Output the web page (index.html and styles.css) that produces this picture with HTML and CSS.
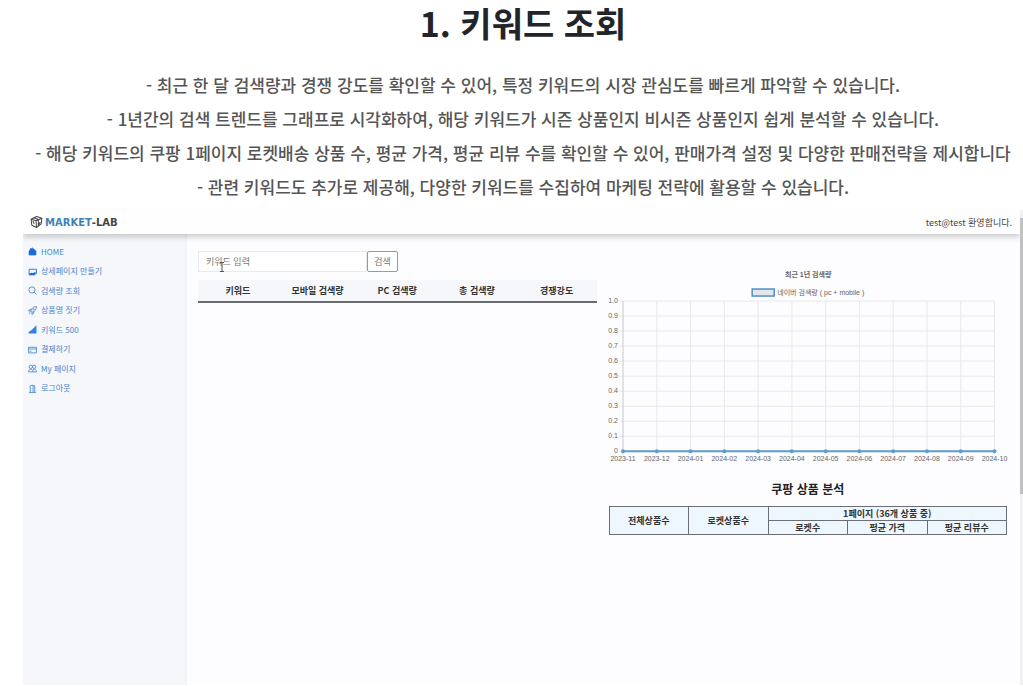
FILE: index.html
```
<!DOCTYPE html>
<html lang="ko">
<head>
    <meta charset="UTF-8">
    <title>키워드 조회</title>
    <link rel="stylesheet" href="styles.css">
</head>
<body>
    <section class="guide">
        <h1>1. 키워드 조회</h1>
        <p>- 최근 한 달 검색량과 경쟁 강도를 확인할 수 있어, 특정 키워드의 시장 관심도를 빠르게 파악할 수 있습니다.</p>
        <p>- 1년간의 검색 트렌드를 그래프로 시각화하여, 해당 키워드가 시즌 상품인지 비시즌 상품인지 쉽게 분석할 수 있습니다.</p>
        <p>- 해당 키워드의 쿠팡 1페이지 로켓배송 상품 수, 평균 가격, 평균 리뷰 수를 확인할 수 있어, 판매가격 설정 및 다양한 판매전략을 제시합니다</p>
        <p>- 관련 키워드도 추가로 제공해, 다양한 키워드를 수집하여 마케팅 전략에 활용할 수 있습니다.</p>
    </section>

    <div class="screen">
        <div class="app">
            <header class="topbar">
                <a class="logo" href="#">
                    <svg viewBox="0 0 14 14" fill="none" stroke="#444" stroke-width="1.1" stroke-linejoin="round">
                        <path d="M7 1 L12.8 3 L12 9 L7 13 L2 10.5 L1.2 4 Z"/>
                        <path d="M1.2 4 L6.5 5.6 L12.8 3 M6.5 5.6 L7 13 M4 2.5 L9 4.4 M9 5 V11 L11 7 M3 6 L4.6 9"/>
                    </svg>
                    <span>MARKET<b>-LAB</b></span>
                </a>
                <span class="welcome">test@test 환영합니다.</span>
            </header>
            <div class="content">
                <nav class="sidebar">
                    <div class="menu">
                        <a href="#"><svg viewBox="0 0 16 16"><path fill="#1769e0" stroke="#1769e0" d="M8 2 L14 7 V14 H2 V7 L4 5 V3 H6 Z"/></svg>HOME</a>
                        <a href="#"><svg viewBox="0 0 16 16"><path stroke="#1769e0" d="M2 4 H15 V12 H12 V14 H2 Z"/><path fill="#1769e0" stroke="none" d="M2 14 V12 L6 10 L9 11 L13 8 V12 L11 14 Z"/></svg>상세페이지 만들기</a>
                        <a href="#"><svg viewBox="0 0 16 16"><circle cx="7" cy="7" r="5.5"/><path d="M11 11 L15 15"/></svg>검색량 조회</a>
                        <a href="#"><svg viewBox="0 0 16 16"><path d="M5 9 C6 4 10 1 15 1 C15 6 12 10 7 11 Z M6 6 H3 L1 9 H5 M10 10 V13 L7 15 V11 M4 11 L2 14"/><circle cx="10" cy="6" r="1"/></svg>상품명 짓기</a>
                        <a href="#"><svg viewBox="0 0 16 16"><path fill="#2f80ed" stroke="none" d="M1 15 V12 L4 11 V10 L8 8 V7 L11 5 V4 L15 1 V15 Z"/></svg>키워드 500</a>
                        <a href="#"><svg viewBox="0 0 16 16"><path d="M1 4 H15 V14 H1 Z M1 7 H15 M3 11 H6"/></svg>결제하기</a>
                        <a href="#"><svg viewBox="0 0 16 16"><circle cx="5" cy="5" r="3"/><circle cx="11" cy="5" r="3"/><path d="M1 14 C1 8 9 8 9 14 Z M9 10 C12 8 15 10 15 14 H9"/></svg>My 페이지</a>
                        <a href="#"><svg viewBox="0 0 16 16"><path d="M4 15 V3 L9 2 V15 M9 3 H12 V15 M2 15 H14 M7 8 V9"/></svg>로그아웃</a>
                    </div>
                </nav>
                <main class="main">
                    <section class="keywords">
                        <form class="search">
                            <input type="text" placeholder="키워드 입력" aria-label="키워드 입력">
                            <button type="button">검색</button>
                            <svg class="cursor" viewBox="0 0 6 10" fill="none" stroke="#555"><path d="M1 .5 H5 M3 .5 V9.5 M1 9.5 H5"/></svg>
                        </form>
                        <table class="keyword-table">
                            <thead>
                                <tr><th>키워드</th><th>모바일 검색량</th><th>PC 검색량</th><th>총 검색량</th><th>경쟁강도</th></tr>
                            </thead>
                        </table>
                    </section>
                    <section class="analysis">
                        <svg class="chart" id="chart" viewBox="0 0 398 200">
                            <text class="chart-title" x="199" y="9">최근 1년 검색량</text>
                            <rect x="143" y="21" width="22" height="7" fill="#e3e5e8" stroke="#4e91c3" stroke-width="1.5"/>
                            <text class="legend" x="168" y="27">네이버 검색량 ( pc + mobile )</text>
                        </svg>
                        <h2>쿠팡 상품 분석</h2>
                        <table class="product-table">
                            <tr><th rowspan="2">전체상품수</th><th rowspan="2">로켓상품수</th><th colspan="3">1페이지 (36개 상품 중)</th></tr>
                            <tr><th>로켓수</th><th>평균 가격</th><th>평균 리뷰수</th></tr>
                        </table>
                    </section>
                </main>
            </div>
        </div>
        <div class="scrollbar"><div class="thumb"></div></div>
    </div>

    <script>
        const chart = document.getElementById("chart");
        const months = ["2023-11", "2023-12", "2024-01", "2024-02", "2024-03", "2024-04",
            "2024-05", "2024-06", "2024-07", "2024-08", "2024-09", "2024-10"];
        const left = 14, right = 385, top1 = 33, bottom = 183;

        function add(tag, attrs, text) {
            const el = document.createElementNS("http://www.w3.org/2000/svg", tag);
            for (const key in attrs) {
                el.setAttribute(key, attrs[key]);
            }
            if (text) {
                el.textContent = text;
            }
            chart.appendChild(el);
        }

        // horizontal grid and y labels
        for (let i = 0; i <= 10; i++) {
            const y = bottom - i * (bottom - top1) / 10;
            add("line", { class: "grid", x1: left - 4, x2: right, y1: y, y2: y });
            add("text", { class: "tick y", x: left - 5, y: y + 2 }, i === 0 ? "0" : (i / 10).toFixed(1));
        }

        // vertical grid and x labels
        months.forEach((month, i) => {
            const x = left + i * (right - left) / (months.length - 1);
            add("line", { class: i === 0 ? "grid axis" : "grid", x1: x, x2: x, y1: top1, y2: bottom + 3 });
            add("text", { class: "tick x", x: x, y: bottom + 10 }, month);
        });

        add("line", { class: "series", x1: left, x2: right, y1: bottom, y2: bottom });
        months.forEach((month, i) => {
            const x = left + i * (right - left) / (months.length - 1);
            add("circle", { class: "point", cx: x, cy: bottom, r: 2 });
        });
    </script>
</body>
</html>
```

FILE: styles.css
```
* {
    box-sizing: border-box;
}
body {
    display: flex;
    flex-direction: column;
    min-height: 100vh;
    margin: 0;
    padding-left: 23px;
    overflow: hidden;
    background-color: #fff;
    font-family: "Noto Sans CJK KR", sans-serif;
}
a {
    color: inherit;
    text-decoration: none;
}

/* guide text */
.guide {
    display: flex;
    flex-direction: column;
    align-items: center;
    padding-bottom: 6px;
    white-space: nowrap;
}
.guide h1 {
    margin: 0 0 22px;
    font-size: 34px;
    line-height: 46px;
    color: #212529;
}
.guide p {
    margin: 0;
    font-size: 17px;
    font-weight: 500;
    line-height: 34px;
    color: #555;
}

/* app window */
.screen {
    display: flex;
    flex: 1;
    margin-bottom: 1px;
    background-color: #fdfcfe;
}
.app {
    display: flex;
    flex-direction: column;
    flex: 1;
}
.scrollbar {
    width: 3px;
    padding-top: 8px;
    background-color: #f1f1f1;
}
.thumb {
    height: 59%;
    background-color: #c1c1c1;
}
.topbar {
    position: relative;
    display: flex;
    align-items: center;
    justify-content: space-between;
    height: 24px;
    padding: 0 8px 0 7px;
    background-color: #fefefe;
    box-shadow: 0 3px 6px rgba(0, 0, 0, 0.2);
    clip-path: inset(0 0 -12px 0);
}
.logo {
    display: flex;
    align-items: center;
    gap: 2px;
    font-family: "DejaVu Sans", sans-serif;
    font-size: 10px;
    font-weight: bold;
    color: #3f83b5;
}
.logo svg {
    width: 13px;
    height: 14px;
}
.logo b {
    color: #444;
}
.welcome {
    font-size: 9px;
    color: #444;
}
.content {
    display: flex;
    flex: 1;
}
.sidebar {
    width: 164px;
    padding: 8px 5px;
    border-right: 2px solid #f3f4f5;
    background-color: #f5f7fb;
}
.menu {
    display: grid;
    grid-auto-rows: 1fr;
    height: 156px;
}
.menu a {
    display: flex;
    align-items: center;
    gap: 4px;
    font-size: 8px;
    line-height: 12px;
    color: #4585cf;
}
.menu svg {
    width: 9px;
    height: 9px;
    fill: none;
    stroke: #4585cf;
    stroke-width: 1.5;
}
.main {
    display: grid;
    grid-template-columns: 1fr 1fr;
    align-items: start;
    gap: 12px;
    flex: 1;
    padding: 17px 13px 0 11px;
}

/* search */
.search {
    position: relative;
    display: flex;
    height: 21px;
    margin-bottom: 8px;
}
.search input {
    width: 169px;
    padding: 0 7px;
    border: 1px solid #e9e9ec;
    background-color: #fff;
    font-family: inherit;
    font-size: 9px;
}
.search input::placeholder {
    color: #777;
}
.search button {
    width: 31px;
    padding: 0;
    border: 1px solid #999;
    border-radius: 2px;
    background-color: #fff;
    font-family: inherit;
    font-size: 9px;
    color: #777;
}
.cursor {
    position: absolute;
    left: 21px;
    top: 11px;
    width: 6px;
    height: 10px;
}

/* tables */
table {
    width: 100%;
    border-collapse: collapse;
    table-layout: fixed;
}
th {
    padding: 0;
    font-size: 9px;
    color: #333;
}
.keyword-table th {
    height: 22px;
    border-bottom: 2px solid #6b6c70;
    background-color: #f5f7fb;
}
.product-table th {
    height: 14px;
    border: 1px solid #6b6f75;
    background-color: #eef6fe;
    line-height: 13px;
}

/* chart */
.analysis {
    padding-top: 17px;
}
.analysis h2 {
    margin: 12px 0 9px;
    font-size: 12px;
    line-height: 17px;
    text-align: center;
    color: #222;
}
.chart {
    display: block;
    width: 100%;
    overflow: visible;
}
.chart text {
    font-family: "Liberation Sans", "Noto Sans CJK KR", sans-serif;
    font-size: 7px;
    fill: #666;
}
.chart .chart-title {
    font-weight: bold;
    text-anchor: middle;
}
.tick.x {
    text-anchor: middle;
}
.tick.y {
    text-anchor: end;
}
.grid {
    stroke: #e9e9eb;
}
.grid.axis {
    stroke: #c8c8ca;
}
.series {
    stroke: #5c9dcb;
    stroke-width: 2;
}
.point {
    fill: #5c9dcb;
}
```
